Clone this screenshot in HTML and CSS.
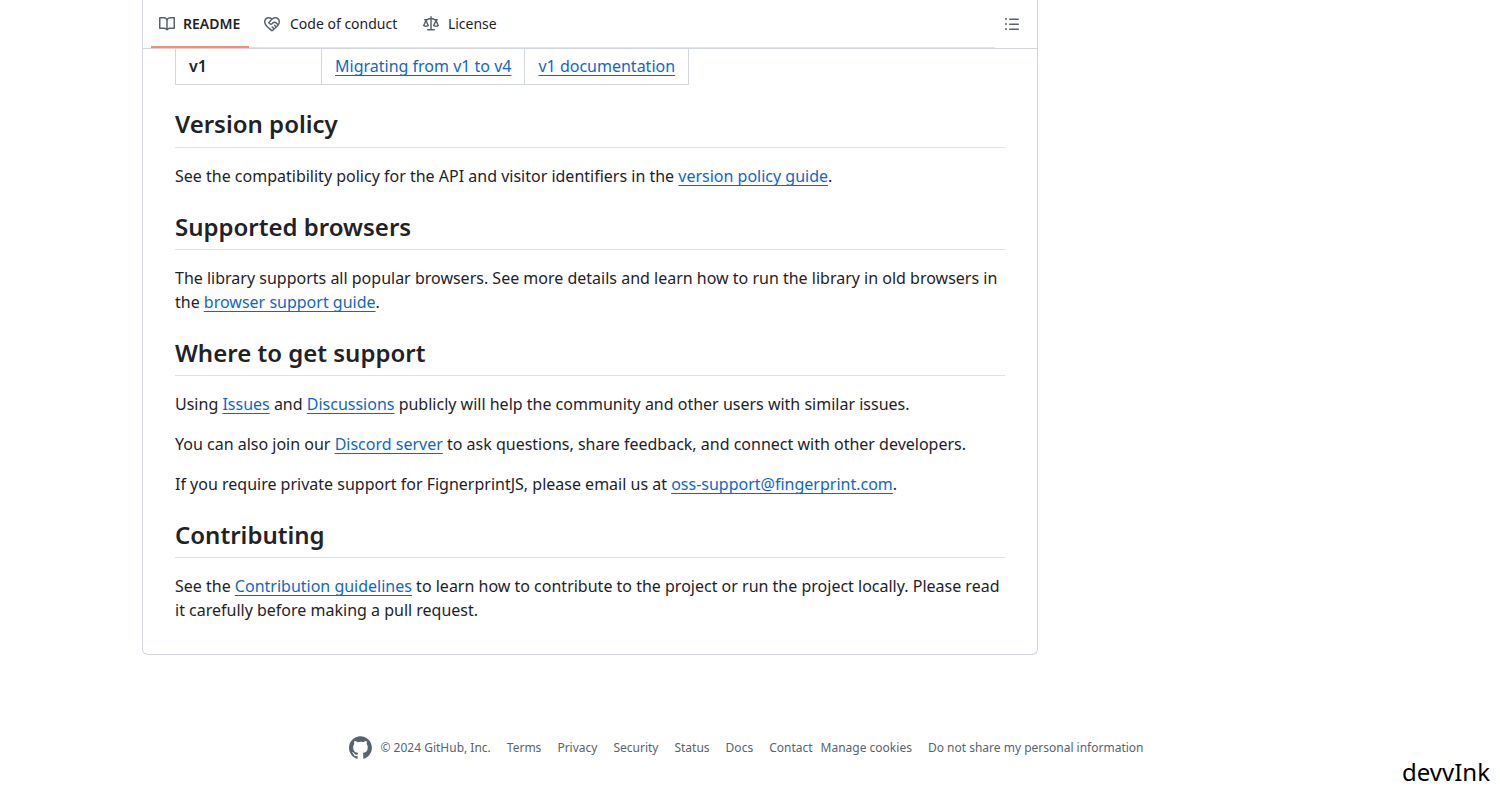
FILE: index.html
```html
<!DOCTYPE html>
<html lang="en">
<head>
<meta charset="utf-8">
<title>README</title>
<link rel="stylesheet" href="styles.css">
</head>
<body>
<main class="box">
  <header class="bar">
    <nav class="tabs">
      <a class="tab active"><svg class="icon" viewBox="0 0 16 16"><path d="M0 1.75A.75.75 0 0 1 .75 1h4.253c1.227 0 2.317.59 3 1.501A3.743 3.743 0 0 1 11.006 1h4.245a.75.75 0 0 1 .75.75v10.5a.75.75 0 0 1-.75.75h-4.507a2.25 2.25 0 0 0-1.591.659l-.622.621a.75.75 0 0 1-1.06 0l-.622-.621A2.25 2.25 0 0 0 5.258 13H.75a.75.75 0 0 1-.75-.75Zm7.251 10.324.004-5.073-.002-2.253A2.25 2.25 0 0 0 5.003 2.5H1.5v9h3.757a3.75 3.75 0 0 1 1.994.574ZM8.755 4.75l-.004 7.322a3.752 3.752 0 0 1 1.992-.572H14.5v-9h-3.495a2.25 2.25 0 0 0-2.25 2.25Z"/></svg><span>README</span></a>
      <a class="tab conduct"><svg class="icon" viewBox="0 0 16 16"><path d="M8.048 2.241c.964-.709 2.079-1.238 3.325-1.241a4.616 4.616 0 0 1 3.282 1.355c.41.408.757.86.996 1.428.238.568.348 1.206.347 1.968 0 2.193-1.505 4.254-3.081 5.862-1.496 1.526-3.213 2.796-4.249 3.563l-.22.163a.749.749 0 0 1-.895 0l-.221-.163c-1.036-.767-2.753-2.037-4.249-3.563C1.51 10.008.007 7.952.002 5.762a4.614 4.614 0 0 1 1.353-3.407C3.123.585 6.223.537 8.048 2.24Zm-1.153.983c-1.25-1.033-3.321-.967-4.48.191a3.115 3.115 0 0 0-.913 2.335c0 1.556 1.109 3.24 2.652 4.813C5.463 11.898 6.96 13.032 8 13.805c.353-.262.758-.565 1.191-.905l-1.326-1.223a.75.75 0 0 1 1.018-1.102l1.48 1.366c.328-.281.659-.577.984-.887L9.99 9.802a.75.75 0 1 1 1.019-1.103l1.384 1.28c.295-.329.566-.661.81-.995L12.92 8.7l-1.167-1.168c-.674-.671-1.78-.664-2.474.03-.268.269-.538.537-.802.797-.893.882-2.319.843-3.185-.032-.346-.35-.693-.697-1.043-1.047a.75.75 0 0 1-.04-1.016c.162-.191.336-.401.52-.623.62-.748 1.356-1.637 2.166-2.417Zm7.112 4.442c.313-.65.491-1.293.491-1.916v-.001c0-.614-.088-1.045-.23-1.385-.143-.339-.357-.633-.673-.949a3.111 3.111 0 0 0-2.218-.915c-1.092.003-2.165.627-3.226 1.602-.823.755-1.554 1.637-2.228 2.45l-.127.154.562.566a.755.755 0 0 0 1.066.02l.794-.79c1.258-1.258 3.312-1.31 4.594-.032.396.394.792.791 1.173 1.173Z"/></svg><span>Code of conduct</span></a>
      <a class="tab license"><svg class="icon" viewBox="0 0 16 16"><path d="M8.75.75V2h.985c.304 0 .603.08.867.231l1.29.736c.038.022.08.033.124.033h2.234a.75.75 0 0 1 0 1.5h-.427l2.111 4.692a.75.75 0 0 1-.154.838l-.53-.53.529.531-.001.002-.002.002-.006.006-.006.005-.01.01-.045.04c-.21.176-.441.327-.686.45C14.556 10.78 13.88 11 13 11a4.498 4.498 0 0 1-2.023-.454 3.544 3.544 0 0 1-.686-.45l-.045-.04-.016-.015-.006-.006-.004-.004v-.001a.75.75 0 0 1-.154-.838L12.178 4.5h-.162c-.305 0-.604-.079-.868-.231l-1.29-.736a.245.245 0 0 0-.124-.033H8.75V13h2.5a.75.75 0 0 1 0 1.5h-6.5a.75.75 0 0 1 0-1.5h2.5V3.5h-.984a.245.245 0 0 0-.124.033l-1.289.737c-.265.15-.564.23-.869.23h-.162l2.112 4.692a.75.75 0 0 1-.154.838l-.53-.53.529.531-.001.002-.002.002-.006.006-.016.015-.045.04c-.21.176-.441.327-.686.45C4.556 10.78 3.88 11 3 11a4.498 4.498 0 0 1-2.023-.454 3.544 3.544 0 0 1-.686-.45l-.045-.04-.016-.015-.006-.006-.004-.004v-.001a.75.75 0 0 1-.154-.838L2.178 4.5H1.75a.75.75 0 0 1 0-1.5h2.234a.249.249 0 0 0 .125-.033l1.288-.737c.265-.15.564-.23.869-.23h.984V.75a.75.75 0 0 1 1.5 0Zm2.945 8.477c.285.135.718.273 1.305.273s1.02-.138 1.305-.273L13 6.327Zm-10 0c.285.135.718.273 1.305.273s1.02-.138 1.305-.273L3 6.327Z"/></svg><span>License</span></a>
    </nav>
    <svg class="icon outline" viewBox="0 0 16 16"><path d="M5.75 2.5h8.5a.75.75 0 0 1 0 1.5h-8.5a.75.75 0 0 1 0-1.5Zm0 5h8.5a.75.75 0 0 1 0 1.5h-8.5a.75.75 0 0 1 0-1.5Zm0 5h8.5a.75.75 0 0 1 0 1.5h-8.5a.75.75 0 0 1 0-1.5ZM2 14a1 1 0 1 1 0-2 1 1 0 0 1 0 2Zm1-6a1 1 0 1 1-2 0 1 1 0 0 1 2 0ZM2 4a1 1 0 1 1 0-2 1 1 0 0 1 0 2Z"/></svg>
  </header>
  <article class="markdown">
    <div class="row">
      <div class="cell version">v1</div>
      <div class="cell"><a class="link">Migrating from v1 to v4</a></div>
      <div class="cell"><a class="link">v1 documentation</a></div>
    </div>
    <h2 class="heading">Version policy</h2>
    <p class="para">See the compatibility policy for the API and visitor identifiers in the <a class="link">version policy guide</a>.</p>
    <h2 class="heading">Supported browsers</h2>
    <p class="para">The library supports all popular browsers. See more details and learn how to run the library in old browsers in the <a class="link">browser support guide</a>.</p>
    <h2 class="heading">Where to get support</h2>
    <p class="para">Using <a class="link">Issues</a> and <a class="link">Discussions</a> publicly will help the community and other users with similar issues.</p>
    <p class="para">You can also join our <a class="link">Discord server</a> to ask questions, share feedback, and connect with other developers.</p>
    <p class="para">If you require private support for FignerprintJS, please email us at <a class="link">oss-support@fingerprint.com</a>.</p>
    <h2 class="heading">Contributing</h2>
    <p class="para">See the <a class="link">Contribution guidelines</a> to learn how to contribute to the project or run the project locally. Please read it carefully before making a pull request.</p>
  </article>
</main>
<footer class="footer">
  <svg class="mark" viewBox="0 0 98 96"><path fill-rule="evenodd" d="M48.854 0C21.839 0 0 22 0 49.217c0 21.756 13.993 40.172 33.405 46.69 2.427.49 3.316-1.059 3.316-2.362 0-1.141-.08-5.052-.08-9.127-13.59 2.934-16.42-5.867-16.42-5.867-2.184-5.704-5.42-7.17-5.42-7.17-4.448-3.015.324-3.015.324-3.015 4.934.326 7.523 5.052 7.523 5.052 4.367 7.496 11.404 5.378 14.235 4.074.404-3.178 1.699-5.378 3.074-6.6-10.839-1.141-22.243-5.378-22.243-24.283 0-5.378 1.94-9.778 5.014-13.2-.485-1.222-2.184-6.275.486-13.038 0 0 4.125-1.304 13.426 5.052a46.97 46.97 0 0 1 12.214-1.63c4.125 0 8.33.571 12.213 1.63 9.302-6.356 13.427-5.052 13.427-5.052 2.67 6.763.97 11.816.485 13.038 3.155 3.422 5.015 7.822 5.015 13.2 0 18.905-11.404 23.06-22.324 24.283 1.78 1.548 3.316 4.481 3.316 9.126 0 6.6-.08 11.897-.08 13.526 0 1.304.89 2.853 3.316 2.364 19.412-6.52 33.405-24.935 33.405-46.691C97.707 22 75.788 0 48.854 0z"/></svg>
  <span class="copy">© 2024 GitHub, Inc.</span>
  <nav class="links">
    <a>Terms</a><a>Privacy</a><a>Security</a><a>Status</a><a>Docs</a><a>Contact</a><a class="cookies">Manage cookies</a><a>Do not share my personal information</a>
  </nav>
</footer>
<div class="watermark">devvInk</div>
</body>
</html>
```
FILE: styles.css
```css
* { box-sizing: border-box; }
body {
  margin: 0;
  height: 800px;
  overflow: hidden;
  position: relative;
  background: #fff;
  color: #1f2328;
  font: 16px/24px "Noto Sans", sans-serif;
}
.box {
  width: 896px;
  height: 655px;
  margin-left: 142px;
  border: 1px solid #d1d7dc;
  border-top: 0;
  border-radius: 0 0 6px 6px;
}
.bar {
  display: flex;
  height: 49px;
  padding: 0 17px 0 8px;
  border-bottom: 1px solid #d1d7dc;
  justify-content: space-between;
}
.tabs {
  display: flex;
  width: 844px;
  height: 48px;
  font-size: 14px;
  box-shadow: inset 0 -1px #dfe3e6;
}
.tab {
  display: flex;
  align-items: center;
  gap: 8px;
  padding: 0 8px;
}
.active {
  width: 98px;
  font-weight: 600;
  border-bottom: 2px solid #f98b76;
  padding-top: 2px;
}
.conduct { margin-left: 7px; gap: 10px; }
.license { margin-left: 10px; gap: 8.6px; }
.icon {
  width: 16px;
  height: 16px;
  flex: none;
  fill: #59636e;
}
.outline { margin-top: 16px; }
.markdown { padding: 0.4px 32px 0; }
.row { display: flex; width: max-content; border-left: 1px solid #d1d7dc; }
.cell {
  height: 36px;
  padding: 5px 13px 6px;
  border-right: 1px solid #d1d7dc;
  border-bottom: 1px solid #d1d7dc;
}
.version { width: 146px; font-weight: 600; }
.heading {
  margin: 24px 0 16px;
  padding-bottom: 7.2px;
  border-bottom: 1px solid #dfe1e4;
  font-size: 24px;
  line-height: 30px;
  font-weight: 600;
}
.para { margin: 0 0 16px; }
.link {
  color: #1267c4;
  text-decoration: underline;
  text-underline-offset: 3.2px;
  text-decoration-skip-ink: none;
}
.footer {
  display: flex;
  align-items: center;
  margin: 81px 0 0 349px;
  height: 24px;
  color: #59636e;
  font-size: 12px;
  line-height: 18px;
  white-space: nowrap;
}
.mark { width: 23px; height: 23px; margin-bottom: 2px; fill: #59636e; }
.copy { margin: 0 16px 0 8.5px; }
.links { display: flex; gap: 16px; }
.cookies { margin-left: -8px; }
.watermark {
  position: absolute;
  right: 10px;
  bottom: 10px;
  color: #000;
  font-size: 24px;
  line-height: 36px;
}
```
